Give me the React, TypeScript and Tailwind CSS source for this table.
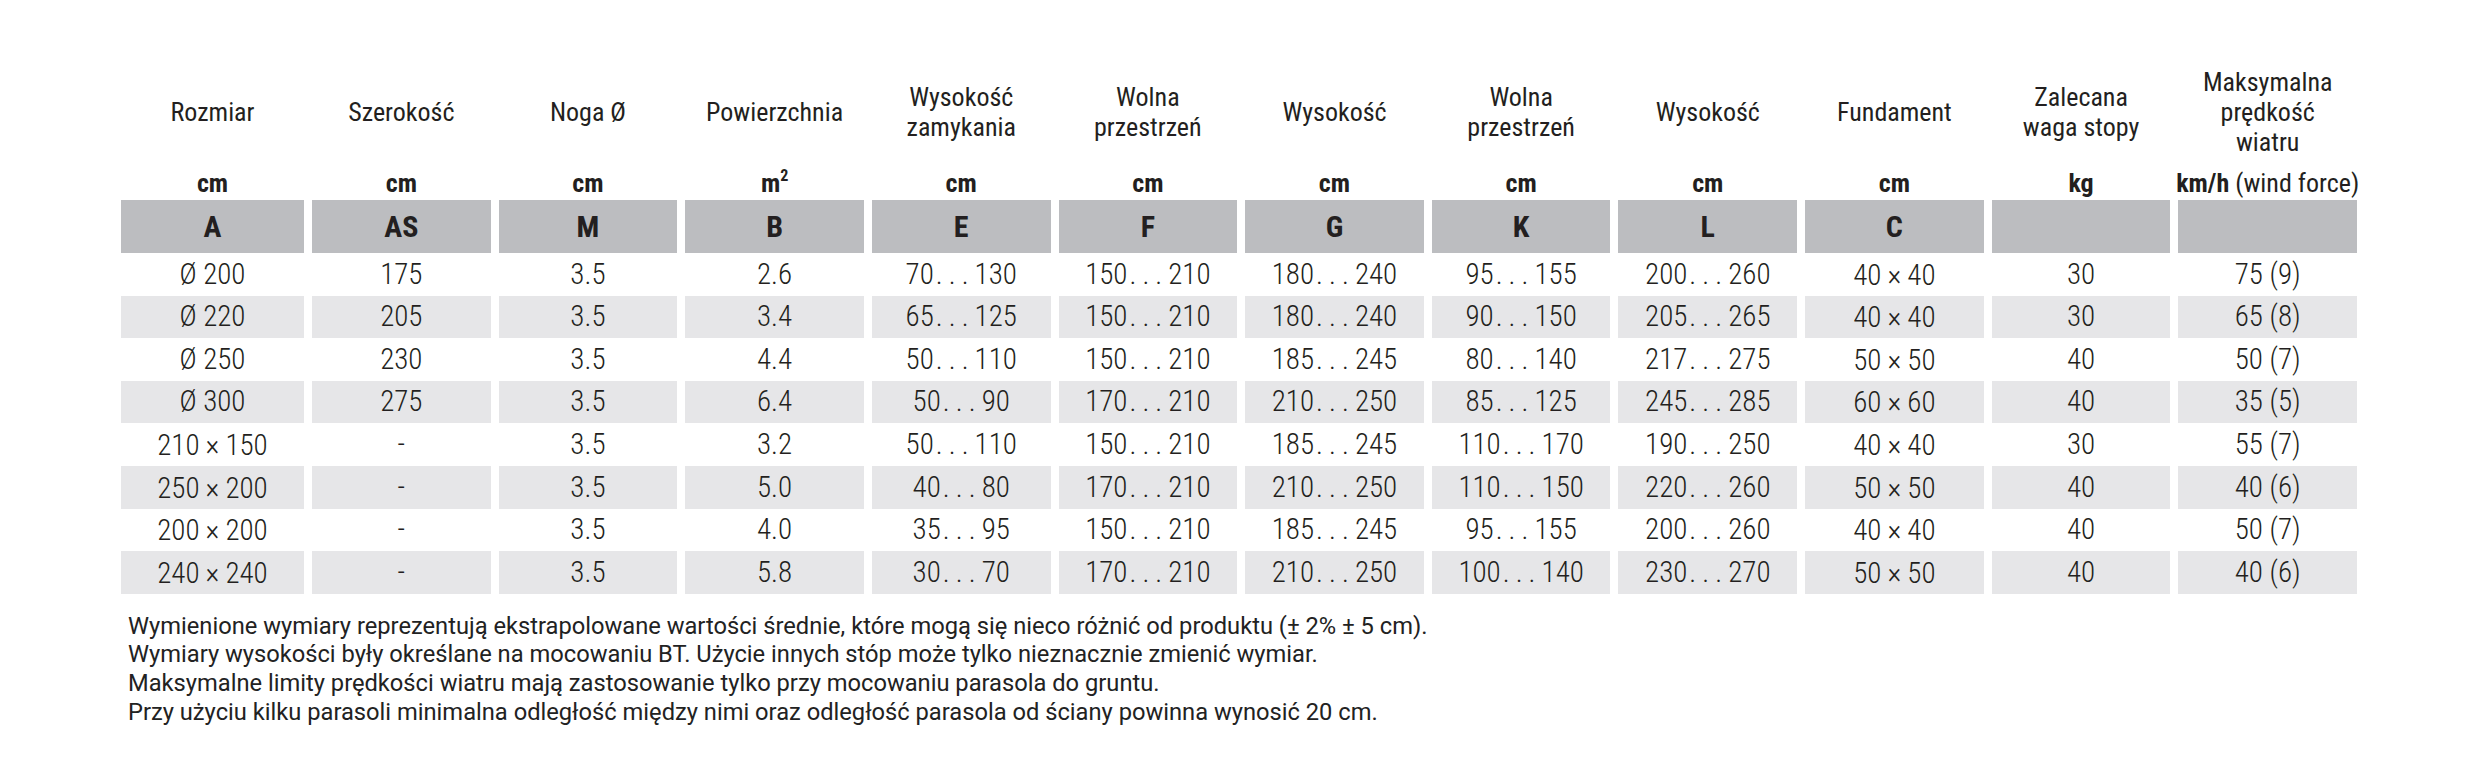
const cols = [
  { label: ["Rozmiar"], unit: "cm", key: "A" },
  { label: ["Szerokość"], unit: "cm", key: "AS" },
  { label: ["Noga Ø"], unit: "cm", key: "M" },
  { label: ["Powierzchnia"], unit: "m²", key: "B" },
  { label: ["Wysokość", "zamykania"], unit: "cm", key: "E" },
  { label: ["Wolna", "przestrzeń"], unit: "cm", key: "F" },
  { label: ["Wysokość"], unit: "cm", key: "G" },
  { label: ["Wolna", "przestrzeń"], unit: "cm", key: "K" },
  { label: ["Wysokość"], unit: "cm", key: "L" },
  { label: ["Fundament"], unit: "cm", key: "C" },
  { label: ["Zalecana", "waga stopy"], unit: "kg", key: "" },
  { label: ["Maksymalna", "prędkość", "wiatru"], unit: "km/h", key: "" },
];

const rows = [
  ["Ø 200", "175", "3.5", "2.6", "70…130", "150…210", "180…240", "95…155", "200…260", "40 × 40", "30", "75 (9)"],
  ["Ø 220", "205", "3.5", "3.4", "65…125", "150…210", "180…240", "90…150", "205…265", "40 × 40", "30", "65 (8)"],
  ["Ø 250", "230", "3.5", "4.4", "50…110", "150…210", "185…245", "80…140", "217…275", "50 × 50", "40", "50 (7)"],
  ["Ø 300", "275", "3.5", "6.4", "50…90", "170…210", "210…250", "85…125", "245…285", "60 × 60", "40", "35 (5)"],
  ["210 × 150", "-", "3.5", "3.2", "50…110", "150…210", "185…245", "110…170", "190…250", "40 × 40", "30", "55 (7)"],
  ["250 × 200", "-", "3.5", "5.0", "40…80", "170…210", "210…250", "110…150", "220…260", "50 × 50", "40", "40 (6)"],
  ["200 × 200", "-", "3.5", "4.0", "35…95", "150…210", "185…245", "95…155", "200…260", "40 × 40", "40", "50 (7)"],
  ["240 × 240", "-", "3.5", "5.8", "30…70", "170…210", "210…250", "100…140", "230…270", "50 × 50", "40", "40 (6)"],
];

const notes = [
  "Wymienione wymiary reprezentują ekstrapolowane wartości średnie, które mogą się nieco różnić od produktu (± 2% ± 5 cm).",
  "Wymiary wysokości były określane na mocowaniu BT. Użycie innych stóp może tylko nieznacznie zmienić wymiar.",
  "Maksymalne limity prędkości wiatru mają zastosowanie tylko przy mocowaniu parasola do gruntu.",
  "Przy użyciu kilku parasoli minimalna odległość między nimi oraz odległość parasola od ściany powinna wynosić 20 cm.",
];

// ranges ("150…210") and sizes ("40 × 40") get wider separators, like the print
function Value({ text }: { text: string }) {
  if (text.includes("…")) {
    const [a, b] = text.split("…");
    return (
      <span>
        {a}
        <span className="ml-[2px] tracking-[6px]">...</span>
        {b}
      </span>
    );
  }
  if (text.includes(" × ")) {
    const [a, b] = text.split(" × ");
    return (
      <span>
        {a}
        <span className="mx-[6px] text-[30px]">×</span>
        {b}
      </span>
    );
  }
  return <span>{text}</span>;
}

export default function App() {
  return (
    <div className="h-[784px] w-[2480px] bg-white pl-[121px] pt-[57px] text-[#231f20]">
      <div className="grid w-[2236px] grid-cols-[183px_repeat(11,minmax(0,1fr))] gap-x-2 font-[Roboto,sans-serif] [font-stretch:75%]">
        {cols.map((c, i) => (
          <div
            key={"l" + i}
            className="flex h-[110px] flex-col items-center justify-center text-center text-[26px] leading-[30px] font-normal"
          >
            {c.label.map((l) => (
              <span key={l}>{l}</span>
            ))}
          </div>
        ))}

        {cols.map((c, i) => (
          <div key={"u" + i} className="flex h-[33px] items-start justify-center text-[26px] leading-[33px]">
            {c.unit === "km/h" ? (
              <span className="whitespace-nowrap">
                <span className="font-bold">km/h</span> (wind force)
              </span>
            ) : c.unit === "m²" ? (
              <span className="font-bold">
                m<sup className="relative -top-[11px] align-baseline text-[16px]">2</sup>
              </span>
            ) : (
              <span className="font-bold">{c.unit}</span>
            )}
          </div>
        ))}

        {cols.map((c, i) => (
          <div
            key={"k" + i}
            className="flex h-[53px] items-center justify-center bg-[#bcbdc0] text-[30px] font-bold"
          >
            {c.key}
          </div>
        ))}

        {rows.map((r, ri) =>
          r.map((v, ci) => (
            <div
              key={ri + "-" + ci}
              className={
                "flex h-[42.6px] items-center justify-center whitespace-nowrap text-[29px] font-light " +
                (ri % 2 === 1 ? "bg-[#e6e6e8]" : "bg-white")
              }
            >
              <Value text={v} />
            </div>
          ))
        )}
      </div>

      <div className="mt-[18px] pl-[7px] font-[Roboto,sans-serif] text-[23.7px] leading-[28.7px] text-[#222]">
        {notes.map((n) => (
          <p key={n}>{n}</p>
        ))}
      </div>
    </div>
  );
}
